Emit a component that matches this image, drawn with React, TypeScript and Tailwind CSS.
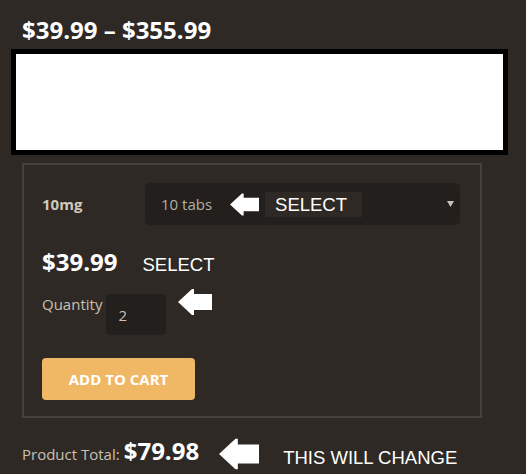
const Arrow = ({ className }: { className: string }) => (
  <svg className={className} viewBox="0 0 34 26" fill="#ffffff">
    <path d="M0 13 L14 0 L16 0 L16 5 L34 5 L34 21 L16 21 L16 26 L14 26 Z" />
  </svg>
);

const App = () => {
  return (
    <div className="w-[526px] h-[474px] overflow-hidden bg-[#2e2925] font-['Open_Sans',sans-serif]">
      <div className="pt-[14px] pl-[22px] text-[24px] leading-[32px] font-bold text-white">$39.99 – $355.99</div>
      <div className="mt-[3px] ml-[11px] w-[497px] h-[106px] border-[5px] border-black bg-white"></div>

      <section className="mt-[8px] ml-[22px] w-[460px] h-[255px] border-2 border-[#45403a] px-[18px] pt-[18px]">
        <div className="flex items-center h-[42px]">
          <span className="w-[103px] text-[15px] font-bold text-[#d2c9bc]">10mg</span>
          <div className="flex items-center w-[315px] h-[42px] rounded-[5px] bg-[#221f1c] pl-[16px]">
            <span className="text-[15px] text-[#b8afa3]">10 tabs</span>
            <Arrow className="ml-[18px] w-[29px] h-[25px]" />
            <span className="ml-[6px] w-[97px] h-[25px] bg-[#2e2925] pl-[10px] font-['Liberation_Sans',sans-serif] text-[18.5px] leading-[25px] text-white">SELECT</span>
            <svg className="ml-auto mr-[6px] w-[7px] h-[6px]" viewBox="0 0 7 6" fill="#c9c1b6">
              <path d="M0 0 L7 0 L3.5 6 Z" />
            </svg>
          </div>
        </div>

        <div className="flex items-baseline mt-[21px] h-[32px]">
          <span className="text-[24px] leading-[32px] font-bold text-white">$39.99</span>
          <span className="ml-[25px] font-['Liberation_Sans',sans-serif] text-[18.5px] leading-[20px] text-white">SELECT</span>
        </div>

        <div className="flex items-start mt-[16px]">
          <span className="text-[15px] leading-[20px] text-[#c9c0b3]">Quantity</span>
          <div className="ml-[4px] flex items-center w-[60px] h-[41px] rounded-[4px] bg-[#221f1c] pl-[12px] text-[15px] leading-[20px] text-[#c9c0b3]">2</div>
          <Arrow className="ml-[12px] -mt-[5px] w-[34px] h-[26px]" />
        </div>

        <button className="mt-[23px] w-[153px] h-[42px] rounded-[4px] bg-[#f0b865] text-[15px] font-bold text-white">ADD TO CART</button>
      </section>

      <div className="flex items-start mt-[17px] pl-[22px]">
        <span className="mt-[9px] text-[15px] leading-[20px] text-[#c9c0b3]">Product Total:</span>
        <span className="ml-[4px] text-[24px] leading-[32px] font-bold text-white">$79.98</span>
        <Arrow className="ml-[20px] mt-[3px] w-[40px] h-[32px]" />
        <span className="ml-[24px] mt-[13px] font-['Liberation_Sans',sans-serif] text-[18.5px] leading-[19px] text-white">THIS WILL CHANGE</span>
      </div>
    </div>
  );
};

export default App;
